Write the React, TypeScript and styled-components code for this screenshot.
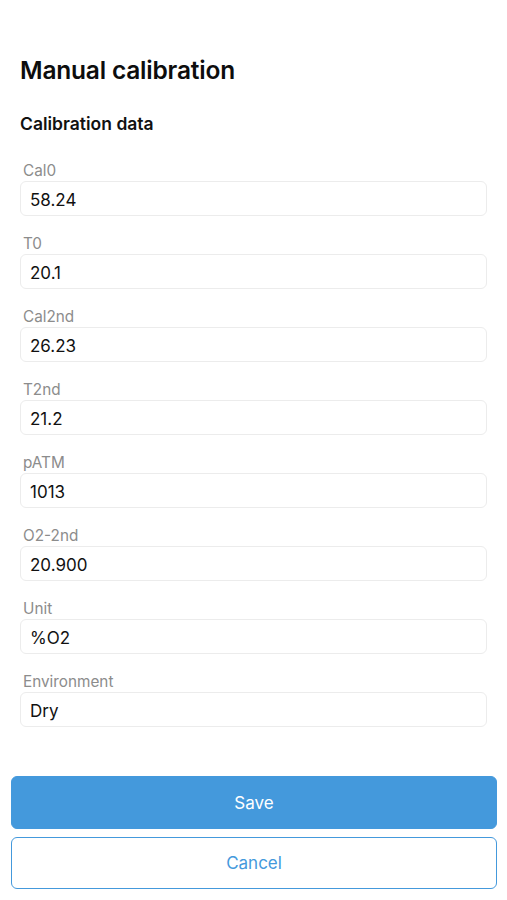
import React, { useState } from 'react';
import styled, { createGlobalStyle } from 'styled-components';

const GlobalStyle = createGlobalStyle`
  html, body {
    margin: 0;
    padding: 0;
    background: #ffffff;
  }
  body {
    font-family: Inter, "Noto Sans", "Liberation Sans", sans-serif;
    color: #111111;
  }
`;

const Screen = styled.div`
  width: 507px;
  height: 900px;
  display: flex;
  flex-direction: column;
  background: #ffffff;
`;

const Content = styled.div`
  display: flex;
  flex-direction: column;
  padding: 55px 20px 0 20px;
`;

const Title = styled.h1`
  margin: 0;
  font-size: 24.5px;
  line-height: 30px;
  font-weight: 600;
  letter-spacing: -0.2px;
  color: #0d0d0d;
`;

const SectionTitle = styled.h2`
  margin: 28px 0 0 0;
  font-size: 17.5px;
  line-height: 22px;
  font-weight: 600;
  color: #111111;
`;

const FieldList = styled.div`
  display: flex;
  flex-direction: column;
  gap: 19px;
  margin-top: 27px;
`;

const Field = styled.label`
  display: flex;
  flex-direction: column;
  gap: 1px;
`;

const FieldLabel = styled.span`
  padding-left: 3px;
  font-size: 15.3px;
  line-height: 18px;
  color: #8c8c8c;
`;

const Input = styled.input`
  box-sizing: border-box;
  width: 100%;
  height: 35px;
  padding: 2px 9px 0 9px;
  border: 1px solid #ececec;
  border-radius: 6px;
  font-family: inherit;
  font-size: 17px;
  color: #111111;
  background: #ffffff;
  outline: none;
`;

const Footer = styled.div`
  display: flex;
  flex-direction: column;
  gap: 8px;
  padding: 49px 10px 0 11px;
`;

const Button = styled.button<{ $primary?: boolean }>`
  box-sizing: border-box;
  width: 100%;
  height: ${(p) => (p.$primary ? '53px' : '52px')};
  border-radius: 6px;
  border: 1px solid #4499dc;
  background: ${(p) => (p.$primary ? '#4499dc' : '#ffffff')};
  color: ${(p) => (p.$primary ? '#ffffff' : '#4499dc')};
  font-family: inherit;
  font-size: 17px;
  cursor: pointer;
`;

const initialFields = [
  { key: 'cal0', label: 'Cal0', value: '58.24' },
  { key: 't0', label: 'T0', value: '20.1' },
  { key: 'cal2nd', label: 'Cal2nd', value: '26.23' },
  { key: 't2nd', label: 'T2nd', value: '21.2' },
  { key: 'patm', label: 'pATM', value: '1013' },
  { key: 'o2', label: 'O2-2nd', value: '20.900' },
  { key: 'unit', label: 'Unit', value: '%O2' },
  { key: 'env', label: 'Environment', value: 'Dry' },
];

function App() {
  const [fields, setFields] = useState(initialFields);

  const update = (key: string, value: string) => {
    setFields((prev) => prev.map((f) => (f.key === key ? { ...f, value } : f)));
  };

  return (
    <Screen>
      <GlobalStyle />
      <Content>
        <Title>Manual calibration</Title>
        <SectionTitle>Calibration data</SectionTitle>
        <FieldList>
          {fields.map((f) => (
            <Field key={f.key}>
              <FieldLabel>{f.label}</FieldLabel>
              <Input value={f.value} onChange={(e) => update(f.key, e.target.value)} />
            </Field>
          ))}
        </FieldList>
      </Content>
      <Footer>
        <Button $primary>Save</Button>
        <Button>Cancel</Button>
      </Footer>
    </Screen>
  );
}

export default App;
